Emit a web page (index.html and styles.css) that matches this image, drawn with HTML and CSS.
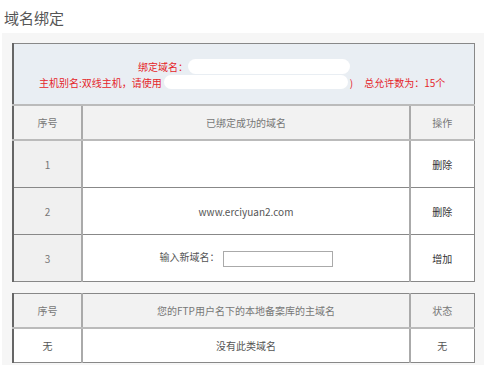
FILE: index.html
```html
<!DOCTYPE html>
<html>
<head>
<meta charset="utf-8">
<link rel="stylesheet" href="styles.css">
</head>
<body>
<h1 class="title">域名绑定</h1>
<div class="panel">
  <table class="grid main">
    <colgroup><col class="c1"><col class="c2"><col class="c3"></colgroup>
    <tr class="notice">
      <td colspan="3">
        <div class="line1"><span class="red">绑定域名：</span><span class="blob blob1"></span></div>
        <div class="line2"><span class="red">主机别名:双线主机，请使用</span><span class="blob blob2"></span><span class="red paren">)</span><span class="red total">总允许数为：15个</span></div>
      </td>
    </tr>
    <tr class="head">
      <td>序号</td><td>已绑定成功的域名</td><td>操作</td>
    </tr>
    <tr class="row">
      <td class="num">1</td><td></td><td class="act">删除</td>
    </tr>
    <tr class="row">
      <td class="num">2</td><td class="dom">www.erciyuan2.com</td><td class="act">删除</td>
    </tr>
    <tr class="row">
      <td class="num">3</td><td class="dom"><span class="lbl">输入新域名：</span><input class="inp" type="text"></td><td class="act">增加</td>
    </tr>
  </table>
  <table class="grid second">
    <colgroup><col class="c1"><col class="c2"><col class="c3"></colgroup>
    <tr class="head">
      <td>序号</td><td>您的FTP用户名下的本地备案库的主域名</td><td>状态</td>
    </tr>
    <tr class="row2">
      <td>无</td><td>没有此类域名</td><td>无</td>
    </tr>
  </table>
</div>
</body>
</html>
```

FILE: styles.css
```css
html, body {
  margin: 0;
  padding: 0;
  background: #fff;
  font-family: "Noto Sans CJK SC", "Microsoft YaHei", sans-serif;
  font-size: 10px;
  color: #666;
}
.title {
  margin: 0;
  padding: 8px 0 0 4px;
  height: 25px;
  font-size: 15px;
  font-weight: normal;
  color: #555;
  line-height: 20px;
}
.panel {
  margin-left: 2px;
  width: 482px;
  background: #f6f6f6;
  padding: 10px 0 4px 10px;
  box-sizing: border-box;
}
.grid {
  border-collapse: collapse;
  width: 461px;
  table-layout: fixed;
  background: #fff;
  border: 1px solid #666;
  border-left-width: 2px;
}
.grid col.c1 { width: 69px; }
.grid col.c2 { width: 328px; }
.grid col.c3 { width: 64px; }
.grid td {
  border: 1px solid #888;
  text-align: center;
  padding: 0;
  white-space: nowrap;
}
.grid td + td { border-left: 2px solid #aaa; }
.notice td {
  height: 60px;
  background: #e9eef3;
  text-align: left;
  border-bottom: 2px solid #bbb;
}
.red { color: #e5252a; }
.line1 {
  display: flex;
  align-items: center;
  height: 16px;
  padding-left: 124px;
}
.line2 {
  display: flex;
  align-items: center;
  height: 16px;
  padding-left: 25px;
}
.blob {
  display: inline-block;
  background: #fff;
  border-radius: 8px;
  flex: none;
}
.blob1 { width: 162px; height: 15px; margin-left: 0; }
.blob2 { width: 184px; height: 14px; margin-left: 2px; }
.paren { margin-left: 2px; }
.total { margin-left: 11px; }
.head td {
  height: 33px;
  background: #f2f2f2;
  color: #777;
  border-bottom: 2px solid #bbb;
}
.row td { height: 46px; }
.row td.num { background: #f0f0f0; color: #777; }
.row td.dom { color: #555; }
.row td.act { color: #333; }
.lbl { color: #555; }
.inp {
  width: 108px;
  height: 14px;
  border: 1px solid #aaa;
  padding: 0;
  margin: 0 0 0 3px;
  vertical-align: middle;
}
.second { margin-top: 11px; }
.second .head td { height: 33px; }
.row2 td { height: 33px; color: #555; }
```
